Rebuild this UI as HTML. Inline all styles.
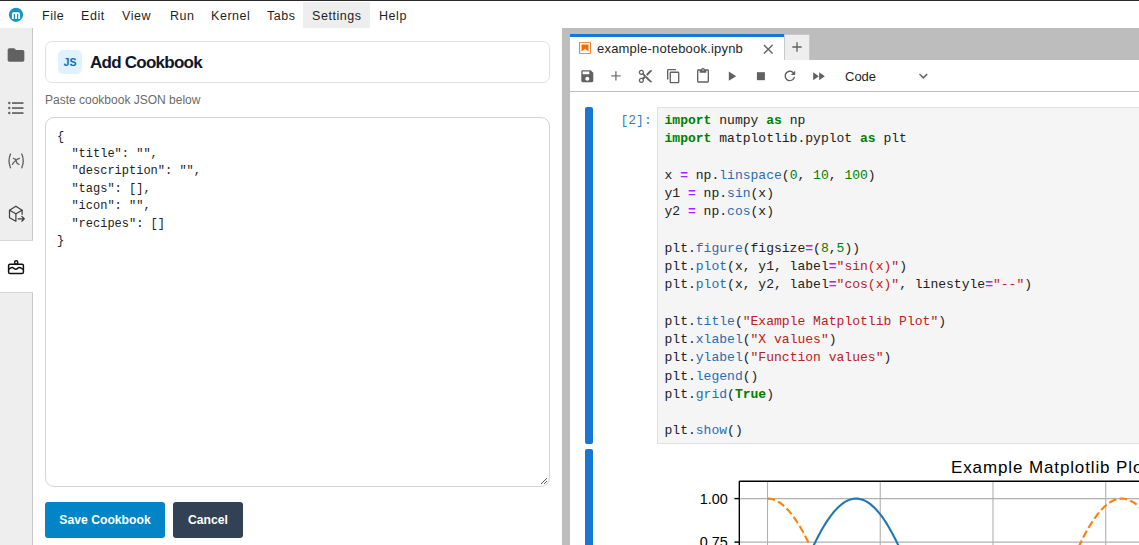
<!DOCTYPE html>
<html><head><meta charset="utf-8">
<style>
*{box-sizing:border-box;margin:0;padding:0}
html,body{width:1139px;height:545px;overflow:hidden;background:#fff;font-family:"Liberation Sans",sans-serif;color:rgba(0,0,0,0.87)}
.abs{position:absolute}
#topline{left:0;top:0;width:1139px;height:1px;background:#2b2b2b}
#menubar{left:0;top:1px;width:1139px;height:28px;background:#fff;border-bottom:1px solid #bdbdbd}
.mi{position:absolute;top:8px;font-size:12.5px;line-height:16px;letter-spacing:0.55px;color:#1f1f1f;white-space:nowrap}
#settingsbg{left:303px;top:1.5px;width:67px;height:27px;background:#eeeeee}
#sidebar{left:0;top:28px;width:33px;height:517px;background:#eeeeee;border-right:1px solid #c8c8c8}
#activetab{left:0;top:240px;width:33px;height:53px;background:#fff;border-top:1px solid #d6d6d6;border-bottom:1px solid #d6d6d6}
#panel{left:33px;top:28px;width:529px;height:517px;background:#fff}
#hdr{left:45px;top:41px;width:505px;height:42px;border:1px solid #e2e2e2;border-radius:7px;background:#fff}
#jsbadge{left:58px;top:50px;width:24px;height:24px;background:#e0f2fe;border-radius:5px;color:#0a6fb3;font-weight:bold;font-size:10.5px;line-height:25px;text-align:center}
#title{left:90px;top:53px;font-size:17px;font-weight:bold;line-height:20px;letter-spacing:-0.75px;color:#0f172a;white-space:nowrap}
#paste{left:45px;top:93px;font-size:12px;line-height:14px;color:#6b6b6b;white-space:nowrap}
#ta{left:45px;top:117px;width:505px;height:370px;border:1px solid #d4d4d4;border-radius:9px;background:#fff}
#tatext{left:57px;top:128.5px;font-family:"Liberation Mono",monospace;font-size:12px;line-height:17.4px;color:#222;white-space:pre}
.btn{position:absolute;top:502px;height:36px;border-radius:3px;color:#fff;font-weight:bold;font-size:12.2px;line-height:37px;text-align:center;white-space:nowrap}
#save{left:45px;width:120px;background:#0284c7}
#cancel{left:173px;width:70px;background:#334155}
#splitter{left:562px;top:28px;width:8px;height:517px;background:#bdbdbd}
#tabbar{left:570px;top:28px;width:569px;height:32px;background:#bdbdbd}
#nbtab{left:570px;top:34px;width:214px;height:26px;background:#fff;border-top:3px solid #1976d2}
#addtab{left:784px;top:34px;width:26px;height:26px;background:#eeeeee;border:1px solid #c8c8c8;border-bottom:none}
#toolbar{left:570px;top:60px;width:569px;height:32px;background:#fff;border-bottom:1px solid #bdbdbd}
#nb{left:570px;top:92px;width:569px;height:453px;background:#fff}
.collapser{position:absolute;left:585px;width:8px;background:#1976d2;border-radius:2px}
#prompt{left:620.5px;top:113px;font-family:"Liberation Mono",monospace;font-size:13px;line-height:16px;color:#307fc1;white-space:pre}
#code{left:657px;top:107px;width:500px;height:337px;background:#f5f5f5;border:1px solid #e0e0e0}
#codetext{left:664.5px;top:112px;font-family:"Liberation Mono",monospace;font-size:13.04px;line-height:18.25px;color:#212121;white-space:pre}
.k{color:#008000;font-weight:bold}
.o{color:#aa22ff;font-weight:bold}
.p{color:#2a6cb0}
.n{color:#008000}
.s{color:#ba2121}
</style></head>
<body>
<div id="topline" class="abs"></div>
<div id="menubar" class="abs"></div>
<div id="settingsbg" class="abs"></div>
<svg class="abs" style="left:0;top:0" width="32" height="28" viewBox="0 0 32 28"><circle cx="16" cy="14.8" r="7.1" fill="#1592c8"/><path d="M12.85 18.9 V14.1 Q12.85 12.9 14.4 12.9 Q16 12.9 16 14.3 V18.9 M16 14.3 Q16 12.9 17.6 12.9 Q19.15 12.9 19.15 14.3 V18.9" stroke="#fff" stroke-width="1.85" fill="none"/></svg>
<div class="mi" style="left:42px">File</div>
<div class="mi" style="left:81px">Edit</div>
<div class="mi" style="left:122px">View</div>
<div class="mi" style="left:170px">Run</div>
<div class="mi" style="left:211px">Kernel</div>
<div class="mi" style="left:267px">Tabs</div>
<div class="mi" style="left:312px">Settings</div>
<div class="mi" style="left:379px">Help</div>

<div id="sidebar" class="abs"></div>
<div id="activetab" class="abs"></div>
<!-- folder -->
<svg class="abs" style="left:6px;top:45px" width="20" height="20" viewBox="0 0 24 24"><path fill="#616161" d="M10 4H4c-1.1 0-1.99.9-1.99 2L2 18c0 1.1.9 2 2 2h16c1.1 0 2-.9 2-2V8c0-1.1-.9-2-2-2h-8l-2-2z"/></svg>
<!-- toc -->
<svg class="abs" style="left:7px;top:100px" width="18" height="16" viewBox="0 0 18 16"><g fill="#616161"><circle cx="2.3" cy="3" r="1.2"/><circle cx="2.3" cy="8" r="1.2"/><circle cx="2.3" cy="13" r="1.2"/><rect x="5" y="2.2" width="11.5" height="1.7"/><rect x="5" y="7.2" width="11.5" height="1.7"/><rect x="5" y="12.2" width="11.5" height="1.7"/></g></svg>
<!-- (x) -->
<svg class="abs" style="left:0;top:148px" width="33" height="26" viewBox="0 148 33 26"><g fill="none" stroke="#616161" stroke-width="1.35" stroke-linecap="round"><path d="M10.5 154 Q7.6 160.9 10.5 167.8"/><path d="M21.8 154 Q24.7 160.9 21.8 167.8"/><path d="M12.4 164.4 Q15.5 159.5 19.4 158.4"/><path d="M13.4 158.4 Q15.8 158.8 16.3 161.3 Q16.8 163.8 18.9 164.4"/></g></svg>
<!-- cube -->
<svg class="abs" style="left:0;top:200px" width="33" height="28" viewBox="0 200 33 28"><g fill="none" stroke="#3d3d3d" stroke-width="1.2" stroke-linejoin="round" stroke-linecap="round"><path d="M9.5 210.3 L15.9 206.2 L22.1 210.3 L15.9 213.8 Z"/><path d="M9.5 210.3 V217.7 L15.9 221.2 V213.8"/><path d="M22.1 210.3 V214.3"/><path d="M18.1 218.8 H24.2 M21.8 216.4 L24.3 218.8 L21.8 221.2"/></g></svg>
<!-- cake -->
<svg class="abs" style="left:4px;top:254px" width="26" height="26" viewBox="0 0 26 26"><g fill="none" stroke="#111" stroke-width="1.5" stroke-linejoin="round"><rect x="4.6" y="10.3" width="14.8" height="9.3" rx="1.3"/><path d="M4.6 15.4 C6 14.6 7.4 13.3 8.6 13.6 C9.8 14 10.7 15.4 11.9 15.3 C13.1 15.2 14.2 13.5 15.3 13.6 C16.5 13.7 18 14.8 19.4 15.4"/><circle cx="12.2" cy="8.4" r="1.6" stroke-width="1.4"/></g></svg>

<div id="panel" class="abs"></div>
<div id="hdr" class="abs"></div>
<div id="jsbadge" class="abs">JS</div>
<div id="title" class="abs">Add Cookbook</div>
<div id="paste" class="abs">Paste cookbook JSON below</div>
<div id="ta" class="abs"></div>
<div id="tatext" class="abs">{
  "title": "",
  "description": "",
  "tags": [],
  "icon": "",
  "recipes": []
}</div>
<svg class="abs" style="left:538px;top:475px" width="10" height="10" viewBox="0 0 10 10"><path d="M9 3 L3 9 M9 6 L6 9" stroke="#555" stroke-width="1"/></svg>
<div id="save" class="btn">Save Cookbook</div>
<div id="cancel" class="btn">Cancel</div>

<div id="splitter" class="abs"></div>
<div id="tabbar" class="abs"></div>
<div id="nbtab" class="abs"></div>
<svg class="abs" style="left:577.8px;top:40.7px" width="14" height="14" viewBox="0 0 22 22"><g fill="#EF6C00"><path d="M18.7 3.3v15.4H3.3V3.3h15.4m1.5-1.5H1.8v18.3h18.3l.1-18.3z"/><path d="M16.5 16.5l-5.4-4.3-5.6 4.3v-11h11z"/></g></svg>
<div class="abs" style="left:597px;top:41px;font-size:13px;line-height:16px;letter-spacing:0.2px;color:#1f1f1f;white-space:nowrap">example-notebook.ipynb</div>
<svg class="abs" style="left:759.7px;top:41.1px" width="16.5" height="16.5" viewBox="0 0 24 24"><path fill="#616161" d="M19 6.41L17.59 5 12 10.59 6.41 5 5 6.41 10.59 12 5 17.59 6.41 19 12 13.41 17.59 19 19 17.59 13.41 12z"/></svg>
<div id="addtab" class="abs"></div>
<svg class="abs" style="left:789px;top:38.7px" width="16" height="16" viewBox="0 0 24 24"><path fill="#616161" d="M19 13h-6v6h-2v-6H5v-2h6V5h2v6h6v2z"/></svg>
<div id="toolbar" class="abs"></div>
<!-- toolbar icons -->
<svg class="abs" style="left:570px;top:60px" width="569" height="32" viewBox="570 60 569 32">
<path transform="translate(579.3 68.2) scale(0.6666666666666666)" fill="#616161" d="M17 3H5a2 2 0 00-2 2v14c0 1.1.9 2 2 2h14c1.1 0 2-.9 2-2V7l-4-4zm-5 16c-1.66 0-3-1.34-3-3s1.34-3 3-3 3 1.34 3 3-1.34 3-3 3zm3-10H5V5h10v4z"/>
<path transform="translate(607.9 67.9) scale(0.6666666666666666)" fill="#757575" d="M19 13h-6v6h-2v-6H5v-2h6V5h2v6h6v2z"/>
<path transform="translate(637.4 68.3) scale(0.6666666666666666)" fill="#616161" d="M9.64 7.64c.23-.5.36-1.05.36-1.64 0-2.21-1.790-4-4-4S2 3.79 2 6s1.79 4 4 4c.59 0 1.14-.13 1.64-.36L10 12l-2.36 2.36C7.14 14.13 6.59 14 6 14c-2.21 0-4 1.79-4 4s1.79 4 4 4 4-1.79 4-4c0-.59-.13-1.14-.36-1.64L12 14l7 7h3v-1L9.640 7.64zM6 8c-1.1 0-2-.89-2-2s.9-2 2-2 2 .89 2 2-.9 2-2 2zm0 12c-1.1 0-2-.89-2-2s.9-2 2-2 2 .89 2 2-.9 2-2 2zm6-7.5c-.28 0-.5-.22-.5-.5s.22-.5.5-.5.5.22.5.5-.22.5-.5.5zM19 3l-6 6 2 2 7-7V3z"/>
<path transform="translate(665.5 68.1) scale(0.8888888888888888)" fill="#616161" d="M11.9,1H3.2C2.4,1,1.7,1.7,1.7,2.5v10.2h1.5V2.5h8.7V1z M14.1,3.9h-8c-0.8,0-1.5,0.7-1.5,1.5v10.2c0,0.8,0.7,1.5,1.5,1.5h8 c0.8,0,1.5-0.7,1.5-1.5V5.4C15.5,4.6,14.9,3.9,14.1,3.9z M14.1,15.5h-8V5.4h8V15.5z"/>
<path transform="translate(695 68) scale(0.6666666666666666)" fill="#616161" d="M19 2h-4.18C14.4.84 13.3 0 12 0c-1.3 0-2.4.84-2.82 2H5c-1.1 0-2 .9-2 2v16c0 1.1.9 2 2 2h14c1.1 0 2-.9 2-2V4c0-1.1-.9-2-2-2zm-7 0c.55 0 1 .45 1 1s-.45 1-1 1-1-.45-1-1 .45-1 1-1zm7 18H5V4h2v3h10V4h2v16z"/>
<path transform="translate(723.5 68.2) scale(0.6666666666666666)" fill="#616161" d="M8 5v14l11-7z"/>
<path transform="translate(752.9 68.2) scale(0.6666666666666666)" fill="#616161" d="M6 6h12v12H6z"/>
<path transform="translate(781.9 67.9) scale(0.8888888888888888)" fill="#616161" d="M9 13.5c-2.49 0-4.5-2.01-4.5-4.5S6.51 4.5 9 4.5c1.24 0 2.360.52 3.17 1.33L10 8h5V3l-1.76 1.76C12.15 3.68 10.66 3 9 3 5.69 3 3.01 5.69 3.01 9S5.69 15 9 15c2.97 0 5.43-2.16 5.9-5h-1.52c-.46 2-2.24 3.5-4.38 3.5z"/>
<path transform="translate(810.5 68.2) scale(0.6666666666666666)" fill="#616161" d="M4 18l8.5-6L4 6v12zm9-12v12l8.5-6L13 6z"/>
<path transform="translate(915.3 68.2) scale(0.8888888888888888)" fill="#616161" d="M5.2,5.9L9,9.7l3.8-3.8l1.2,1.2l-4.9,5l-4.9-5L5.2,5.9z"/>
</svg>
<div class="abs" style="left:845px;top:69px;font-size:13px;line-height:16px;color:#1f1f1f">Code</div>

<div id="nb" class="abs"></div>
<div class="collapser" style="top:107px;height:336.5px"></div>
<div class="collapser" style="top:449px;height:110px"></div>
<div id="prompt" class="abs">[2]:</div>
<div id="code" class="abs"></div>
<div id="codetext" class="abs"><span class="k">import</span> numpy <span class="k">as</span> np
<span class="k">import</span> matplotlib.pyplot <span class="k">as</span> plt

x <span class="o">=</span> np.<span class="p">linspace</span>(<span class="n">0</span>, <span class="n">10</span>, <span class="n">100</span>)
y1 <span class="o">=</span> np.<span class="p">sin</span>(x)
y2 <span class="o">=</span> np.<span class="p">cos</span>(x)

plt.<span class="p">figure</span>(figsize<span class="o">=</span>(<span class="n">8</span>,<span class="n">5</span>))
plt.<span class="p">plot</span>(x, y1, label<span class="o">=</span><span class="s">"sin(x)"</span>)
plt.<span class="p">plot</span>(x, y2, label<span class="o">=</span><span class="s">"cos(x)"</span>, linestyle<span class="o">=</span><span class="s">"--"</span>)

plt.<span class="p">title</span>(<span class="s">"Example Matplotlib Plot"</span>)
plt.<span class="p">xlabel</span>(<span class="s">"X values"</span>)
plt.<span class="p">ylabel</span>(<span class="s">"Function values"</span>)
plt.<span class="p">legend</span>()
plt.<span class="p">grid</span>(<span class="k">True</span>)

plt.<span class="p">show</span>()</div>

<!-- plot -->
<svg id="plot" class="abs" style="left:570px;top:445px" width="569" height="100" viewBox="570 445 569 100">
<rect x="739.32" y="481.20" width="620.07" height="200" fill="#fff"/>
<line x1="767.50" y1="481.20" x2="767.50" y2="560" stroke="#b0b0b0" stroke-width="1.1"/>
<line x1="880.24" y1="481.20" x2="880.24" y2="560" stroke="#b0b0b0" stroke-width="1.1"/>
<line x1="992.98" y1="481.20" x2="992.98" y2="560" stroke="#b0b0b0" stroke-width="1.1"/>
<line x1="1105.72" y1="481.20" x2="1105.72" y2="560" stroke="#b0b0b0" stroke-width="1.1"/>
<line x1="1218.46" y1="481.20" x2="1218.46" y2="560" stroke="#b0b0b0" stroke-width="1.1"/>
<line x1="1331.20" y1="481.20" x2="1331.20" y2="560" stroke="#b0b0b0" stroke-width="1.1"/>
<line x1="739.32" y1="498.60" x2="1359.38" y2="498.60" stroke="#b0b0b0" stroke-width="1.1"/>
<line x1="739.32" y1="542.10" x2="1359.38" y2="542.10" stroke="#b0b0b0" stroke-width="1.1"/>
<line x1="739.32" y1="585.60" x2="1359.38" y2="585.60" stroke="#b0b0b0" stroke-width="1.1"/>
<path d="M767.50,672.60 L768.91,668.25 L770.32,663.90 L771.73,659.56 L773.14,655.23 L774.55,650.91 L775.96,646.60 L777.36,642.31 L778.77,638.03 L780.18,633.78 L781.59,629.55 L783.00,625.35 L784.41,621.18 L785.82,617.04 L787.23,612.94 L788.64,608.87 L790.05,604.84 L791.46,600.86 L792.87,596.92 L794.28,593.02 L795.68,589.18 L797.09,585.39 L798.50,581.65 L799.91,577.97 L801.32,574.35 L802.73,570.79 L804.14,567.30 L805.55,563.87 L806.96,560.51 L808.37,557.21 L809.78,553.99 L811.19,550.85 L812.60,547.78 L814.01,544.79 L815.41,541.88 L816.82,539.05 L818.23,536.30 L819.64,533.64 L821.05,531.07 L822.46,528.58 L823.87,526.18 L825.28,523.88 L826.69,521.67 L828.10,519.55 L829.51,517.53 L830.92,515.61 L832.33,513.78 L833.73,512.05 L835.14,510.43 L836.55,508.90 L837.96,507.48 L839.37,506.16 L840.78,504.94 L842.19,503.83 L843.60,502.82 L845.01,501.92 L846.42,501.13 L847.83,500.45 L849.24,499.87 L850.65,499.40 L852.05,499.04 L853.46,498.78 L854.87,498.64 L856.28,498.60 L857.69,498.67 L859.10,498.86 L860.51,499.15 L861.92,499.54 L863.33,500.05 L864.74,500.66 L866.15,501.39 L867.56,502.22 L868.97,503.15 L870.38,504.19 L871.78,505.34 L873.19,506.59 L874.60,507.94 L876.01,509.40 L877.42,510.96 L878.83,512.62 L880.24,514.38 L881.65,516.24 L883.06,518.20 L884.47,520.25 L885.88,522.40 L887.29,524.64 L888.70,526.98 L890.10,529.41 L891.51,531.92 L892.92,534.53 L894.33,537.22 L895.74,539.99 L897.15,542.85 L898.56,545.79 L899.97,548.80 L901.38,551.90 L902.79,555.07 L904.20,558.31 L905.61,561.63 L907.02,565.01 L908.42,568.47 L909.83,571.98 L911.24,575.56 L912.65,579.20 L914.06,582.90 L915.47,586.66 L916.88,590.47 L918.29,594.33 L919.70,598.24 L921.11,602.19 L922.52,606.19 L923.93,610.23 L925.34,614.31 L926.75,618.43 L928.15,622.58 L929.56,626.76 L930.97,630.97 L932.38,635.21 L933.79,639.47 L935.20,643.75 L936.61,648.05 L938.02,652.36 L939.43,656.69 L940.84,661.02 L942.25,665.36 L943.66,669.71 L945.07,674.06 L946.47,678.41 L947.88,682.76 L949.29,687.10 L950.70,691.43 L952.11,695.74 L953.52,700.05 L954.93,704.33 L956.34,708.60 L957.75,712.85 L959.16,717.06 L960.57,721.26 L961.98,725.42 L963.39,729.54 L964.79,733.64 L966.20,737.69 L967.61,741.70 L969.02,745.67 L970.43,749.60 L971.84,753.47 L973.25,757.30 L974.66,761.07 L976.07,764.79 L977.48,768.45 L978.89,772.05 L980.30,775.59 L981.71,779.06 L983.12,782.47 L984.52,785.81 L985.93,789.08 L987.34,792.27 L988.75,795.39 L990.16,798.43 L991.57,801.40 L992.98,804.28 L994.39,807.09 L995.80,809.80 L997.21,812.44 L998.62,814.98 L1000.03,817.44 L1001.44,819.80 L1002.84,822.07 L1004.25,824.25 L1005.66,826.34 L1007.07,828.33 L1008.48,830.22 L1009.89,832.01 L1011.30,833.71 L1012.71,835.30 L1014.12,836.79 L1015.53,838.18 L1016.94,839.46 L1018.35,840.64 L1019.76,841.72 L1021.16,842.69 L1022.57,843.55 L1023.98,844.31 L1025.39,844.96 L1026.80,845.50 L1028.21,845.94 L1029.62,846.26 L1031.03,846.48 L1032.44,846.59 L1033.85,846.59 L1035.26,846.48 L1036.67,846.26 L1038.08,845.93 L1039.49,845.50 L1040.89,844.96 L1042.30,844.30 L1043.71,843.55 L1045.12,842.68 L1046.53,841.71 L1047.94,840.63 L1049.35,839.45 L1050.76,838.17 L1052.17,836.78 L1053.58,835.29 L1054.99,833.69 L1056.40,832.00 L1057.81,830.20 L1059.21,828.31 L1060.62,826.32 L1062.03,824.24 L1063.44,822.05 L1064.85,819.78 L1066.26,817.41 L1067.67,814.96 L1069.08,812.41 L1070.49,809.78 L1071.90,807.06 L1073.31,804.26 L1074.72,801.37 L1076.13,798.41 L1077.53,795.36 L1078.94,792.24 L1080.35,789.05 L1081.76,785.78 L1083.17,782.44 L1084.58,779.03 L1085.99,775.56 L1087.40,772.02 L1088.81,768.42 L1090.22,764.76 L1091.63,761.04 L1093.04,757.27 L1094.45,753.44 L1095.86,749.56 L1097.26,745.64 L1098.67,741.67 L1100.08,737.65 L1101.49,733.60 L1102.90,729.51 L1104.31,725.38 L1105.72,721.22 L1107.13,717.03 L1108.54,712.81 L1109.95,708.56 L1111.36,704.30 L1112.77,700.01 L1114.18,695.71 L1115.58,691.39 L1116.99,687.06 L1118.40,682.72 L1119.81,678.37 L1121.22,674.02 L1122.63,669.67 L1124.04,665.33 L1125.45,660.98 L1126.86,656.65 L1128.27,652.32 L1129.68,648.01 L1131.09,643.71 L1132.50,639.43 L1133.90,635.17 L1135.31,630.93 L1136.72,626.72 L1138.13,622.54 L1139.54,618.39 L1140.95,614.28 L1142.36,610.20 L1143.77,606.16 L1145.18,602.16 L1146.59,598.20 L1148.00,594.29 L1149.41,590.43 L1150.82,586.62 L1152.23,582.87 L1153.63,579.17 L1155.04,575.53 L1156.45,571.95 L1157.86,568.43 L1159.27,564.98 L1160.68,561.60 L1162.09,558.28 L1163.50,555.04 L1164.91,551.87 L1166.32,548.78 L1167.73,545.76 L1169.14,542.82 L1170.55,539.96 L1171.95,537.19 L1173.36,534.50 L1174.77,531.90 L1176.18,529.38 L1177.59,526.96 L1179.00,524.62 L1180.41,522.38 L1181.82,520.23 L1183.23,518.18 L1184.64,516.22 L1186.05,514.37 L1187.46,512.61 L1188.87,510.95 L1190.28,509.39 L1191.68,507.93 L1193.09,506.58 L1194.50,505.33 L1195.91,504.18 L1197.32,503.14 L1198.73,502.21 L1200.14,501.38 L1201.55,500.66 L1202.96,500.05 L1204.37,499.54 L1205.78,499.14 L1207.19,498.85 L1208.60,498.67 L1210.00,498.60 L1211.41,498.64 L1212.82,498.78 L1214.23,499.04 L1215.64,499.40 L1217.05,499.87 L1218.46,500.45 L1219.87,501.14 L1221.28,501.93 L1222.69,502.83 L1224.10,503.84 L1225.51,504.95 L1226.92,506.17 L1228.32,507.49 L1229.73,508.91 L1231.14,510.44 L1232.55,512.07 L1233.96,513.79 L1235.37,515.62 L1236.78,517.55 L1238.19,519.57 L1239.60,521.69 L1241.01,523.90 L1242.42,526.20 L1243.83,528.60 L1245.24,531.09 L1246.64,533.66 L1248.05,536.33 L1249.46,539.07 L1250.87,541.90 L1252.28,544.81 L1253.69,547.81 L1255.10,550.88 L1256.51,554.02 L1257.92,557.24 L1259.33,560.54 L1260.74,563.90 L1262.15,567.33 L1263.56,570.82 L1264.97,574.38 L1266.37,578.01 L1267.78,581.69 L1269.19,585.42 L1270.60,589.21 L1272.01,593.06 L1273.42,596.95 L1274.83,600.89 L1276.24,604.88 L1277.65,608.90 L1279.06,612.97 L1280.47,617.08 L1281.88,621.22 L1283.29,625.39 L1284.69,629.59 L1286.10,633.82 L1287.51,638.07 L1288.92,642.34 L1290.33,646.64 L1291.74,650.94 L1293.15,655.27 L1294.56,659.60 L1295.97,663.94 L1297.38,668.29 L1298.79,672.64 L1300.20,676.99 L1301.61,681.33 L1303.01,685.68 L1304.42,690.01 L1305.83,694.33 L1307.24,698.64 L1308.65,702.93 L1310.06,707.21 L1311.47,711.46 L1312.88,715.69 L1314.29,719.89 L1315.70,724.06 L1317.11,728.20 L1318.52,732.30 L1319.93,736.37 L1321.34,740.39 L1322.74,744.38 L1324.15,748.32 L1325.56,752.21 L1326.97,756.05 L1328.38,759.84 L1329.79,763.58 L1331.20,767.26" fill="none" stroke="#1f77b4" stroke-width="2.1"/>
<path d="M767.50,498.60 L768.91,498.65 L770.32,498.82 L771.73,499.09 L773.14,499.47 L774.55,499.96 L775.96,500.55 L777.36,501.26 L778.77,502.07 L780.18,502.99 L781.59,504.01 L783.00,505.14 L784.41,506.37 L785.82,507.71 L787.23,509.15 L788.64,510.69 L790.05,512.34 L791.46,514.08 L792.87,515.92 L794.28,517.86 L795.68,519.90 L797.09,522.03 L798.50,524.26 L799.91,526.58 L801.32,528.99 L802.73,531.49 L804.14,534.08 L805.55,536.76 L806.96,539.52 L808.37,542.36 L809.78,545.29 L811.19,548.29 L812.60,551.37 L814.01,554.53 L815.41,557.76 L816.82,561.07 L818.23,564.44 L819.64,567.88 L821.05,571.39 L822.46,574.96 L823.87,578.59 L825.28,582.28 L826.69,586.02 L828.10,589.82 L829.51,593.67 L830.92,597.58 L832.33,601.52 L833.73,605.52 L835.14,609.55 L836.55,613.62 L837.96,617.73 L839.37,621.88 L840.78,626.06 L842.19,630.26 L843.60,634.49 L845.01,638.75 L846.42,643.03 L847.83,647.32 L849.24,651.63 L850.65,655.96 L852.05,660.29 L853.46,664.63 L854.87,668.98 L856.28,673.33 L857.69,677.68 L859.10,682.03 L860.51,686.37 L861.92,690.70 L863.33,695.02 L864.74,699.33 L866.15,703.61 L867.56,707.89 L868.97,712.13 L870.38,716.36 L871.78,720.55 L873.19,724.72 L874.60,728.85 L876.01,732.95 L877.42,737.01 L878.83,741.03 L880.24,745.01 L881.65,748.94 L883.06,752.83 L884.47,756.66 L885.88,760.44 L887.29,764.17 L888.70,767.84 L890.10,771.45 L891.51,775.00 L892.92,778.48 L894.33,781.90 L895.74,785.25 L897.15,788.53 L898.56,791.74 L899.97,794.87 L901.38,797.93 L902.79,800.91 L904.20,803.80 L905.61,806.62 L907.02,809.35 L908.42,812.00 L909.83,814.56 L911.24,817.03 L912.65,819.41 L914.06,821.70 L915.47,823.89 L916.88,826.00 L918.29,828.00 L919.70,829.91 L921.11,831.72 L922.52,833.43 L923.93,835.04 L925.34,836.55 L926.75,837.95 L928.15,839.25 L929.56,840.45 L930.97,841.55 L932.38,842.53 L933.79,843.42 L935.20,844.19 L936.61,844.86 L938.02,845.42 L939.43,845.87 L940.84,846.21 L942.25,846.45 L943.66,846.58 L945.07,846.59 L946.47,846.50 L947.88,846.30 L949.29,846.00 L950.70,845.58 L952.11,845.05 L953.52,844.42 L954.93,843.68 L956.34,842.83 L957.75,841.88 L959.16,840.82 L960.57,839.66 L961.98,838.39 L963.39,837.02 L964.79,835.54 L966.20,833.97 L967.61,832.29 L969.02,830.51 L970.43,828.64 L971.84,826.66 L973.25,824.59 L974.66,822.43 L976.07,820.17 L977.48,817.82 L978.89,815.38 L980.30,812.85 L981.71,810.23 L983.12,807.52 L984.52,804.74 L985.93,801.86 L987.34,798.91 L988.75,795.88 L990.16,792.77 L991.57,789.59 L992.98,786.33 L994.39,783.01 L995.80,779.61 L997.21,776.15 L998.62,772.62 L1000.03,769.03 L1001.44,765.38 L1002.84,761.67 L1004.25,757.91 L1005.66,754.09 L1007.07,750.22 L1008.48,746.30 L1009.89,742.34 L1011.30,738.33 L1012.71,734.28 L1014.12,730.20 L1015.53,726.08 L1016.94,721.92 L1018.35,717.73 L1019.76,713.52 L1021.16,709.28 L1022.57,705.02 L1023.98,700.73 L1025.39,696.43 L1026.80,692.11 L1028.21,687.79 L1029.62,683.45 L1031.03,679.10 L1032.44,674.76 L1033.85,670.41 L1035.26,666.06 L1036.67,661.71 L1038.08,657.38 L1039.49,653.05 L1040.89,648.73 L1042.30,644.43 L1043.71,640.15 L1045.12,635.88 L1046.53,631.64 L1047.94,627.43 L1049.35,623.24 L1050.76,619.09 L1052.17,614.97 L1053.58,610.88 L1054.99,606.83 L1056.40,602.83 L1057.81,598.86 L1059.21,594.95 L1060.62,591.08 L1062.03,587.26 L1063.44,583.50 L1064.85,579.79 L1066.26,576.14 L1067.67,572.55 L1069.08,569.02 L1070.49,565.56 L1071.90,562.16 L1073.31,558.84 L1074.72,555.58 L1076.13,552.40 L1077.53,549.29 L1078.94,546.26 L1080.35,543.31 L1081.76,540.44 L1083.17,537.65 L1084.58,534.95 L1085.99,532.33 L1087.40,529.80 L1088.81,527.36 L1090.22,525.01 L1091.63,522.75 L1093.04,520.59 L1094.45,518.52 L1095.86,516.55 L1097.26,514.67 L1098.67,512.90 L1100.08,511.22 L1101.49,509.64 L1102.90,508.17 L1104.31,506.80 L1105.72,505.53 L1107.13,504.37 L1108.54,503.31 L1109.95,502.36 L1111.36,501.51 L1112.77,500.77 L1114.18,500.14 L1115.58,499.62 L1116.99,499.20 L1118.40,498.89 L1119.81,498.70 L1121.22,498.61 L1122.63,498.62 L1124.04,498.75 L1125.45,498.99 L1126.86,499.33 L1128.27,499.79 L1129.68,500.35 L1131.09,501.02 L1132.50,501.79 L1133.90,502.67 L1135.31,503.66 L1136.72,504.76 L1138.13,505.96 L1139.54,507.26 L1140.95,508.67 L1142.36,510.18 L1143.77,511.79 L1145.18,513.50 L1146.59,515.31 L1148.00,517.22 L1149.41,519.22 L1150.82,521.32 L1152.23,523.52 L1153.63,525.81 L1155.04,528.19 L1156.45,530.66 L1157.86,533.22 L1159.27,535.87 L1160.68,538.60 L1162.09,541.42 L1163.50,544.32 L1164.91,547.30 L1166.32,550.36 L1167.73,553.49 L1169.14,556.70 L1170.55,559.98 L1171.95,563.33 L1173.36,566.75 L1174.77,570.23 L1176.18,573.78 L1177.59,577.39 L1179.00,581.06 L1180.41,584.79 L1181.82,588.57 L1183.23,592.41 L1184.64,596.29 L1186.05,600.23 L1187.46,604.20 L1188.87,608.22 L1190.28,612.29 L1191.68,616.38 L1193.09,620.52 L1194.50,624.68 L1195.91,628.88 L1197.32,633.10 L1198.73,637.35 L1200.14,641.62 L1201.55,645.91 L1202.96,650.22 L1204.37,654.54 L1205.78,658.87 L1207.19,663.21 L1208.60,667.56 L1210.00,671.91 L1211.41,676.26 L1212.82,680.60 L1214.23,684.95 L1215.64,689.28 L1217.05,693.61 L1218.46,697.92 L1219.87,702.21 L1221.28,706.49 L1222.69,710.74 L1224.10,714.98 L1225.51,719.18 L1226.92,723.36 L1228.32,727.50 L1229.73,731.61 L1231.14,735.69 L1232.55,739.72 L1233.96,743.71 L1235.37,747.66 L1236.78,751.56 L1238.19,755.41 L1239.60,759.21 L1241.01,762.96 L1242.42,766.65 L1243.83,770.28 L1245.24,773.84 L1246.64,777.35 L1248.05,780.79 L1249.46,784.16 L1250.87,787.47 L1252.28,790.70 L1253.69,793.85 L1255.10,796.94 L1256.51,799.94 L1257.92,802.86 L1259.33,805.71 L1260.74,808.47 L1262.15,811.14 L1263.56,813.73 L1264.97,816.23 L1266.37,818.64 L1267.78,820.96 L1269.19,823.19 L1270.60,825.32 L1272.01,827.35 L1273.42,829.29 L1274.83,831.14 L1276.24,832.88 L1277.65,834.52 L1279.06,836.06 L1280.47,837.50 L1281.88,838.84 L1283.29,840.07 L1284.69,841.20 L1286.10,842.22 L1287.51,843.14 L1288.92,843.95 L1290.33,844.65 L1291.74,845.25 L1293.15,845.73 L1294.56,846.11 L1295.97,846.38 L1297.38,846.55 L1298.79,846.60 L1300.20,846.54 L1301.61,846.38 L1303.01,846.11 L1304.42,845.73 L1305.83,845.24 L1307.24,844.64 L1308.65,843.94 L1310.06,843.12 L1311.47,842.21 L1312.88,841.18 L1314.29,840.05 L1315.70,838.82 L1317.11,837.48 L1318.52,836.04 L1319.93,834.49 L1321.34,832.85 L1322.74,831.10 L1324.15,829.26 L1325.56,827.32 L1326.97,825.28 L1328.38,823.15 L1329.79,820.92 L1331.20,818.60" fill="none" stroke="#ff7f0e" stroke-width="2.1" stroke-dasharray="7.7,3.3"/>
<line x1="739.32" y1="481.20" x2="1359.38" y2="481.20" stroke="#000" stroke-width="1.4"/>
<line x1="739.32" y1="481.20" x2="739.32" y2="560" stroke="#000" stroke-width="1.4"/>
<line x1="734.42" y1="498.60" x2="739.32" y2="498.60" stroke="#000" stroke-width="1.4"/>
<text x="699.82" y="503.80" textLength="28" lengthAdjust="spacingAndGlyphs" font-family="Liberation Sans" font-size="14" fill="#000">1.00</text>
<line x1="734.42" y1="542.10" x2="739.32" y2="542.10" stroke="#000" stroke-width="1.4"/>
<text x="699.82" y="547.30" textLength="28" lengthAdjust="spacingAndGlyphs" font-family="Liberation Sans" font-size="14" fill="#000">0.75</text>
<text x="951" y="473" textLength="197" lengthAdjust="spacing" font-family="Liberation Sans" font-size="17" fill="#000">Example Matplotlib Plot</text>
</svg>
</body></html>
